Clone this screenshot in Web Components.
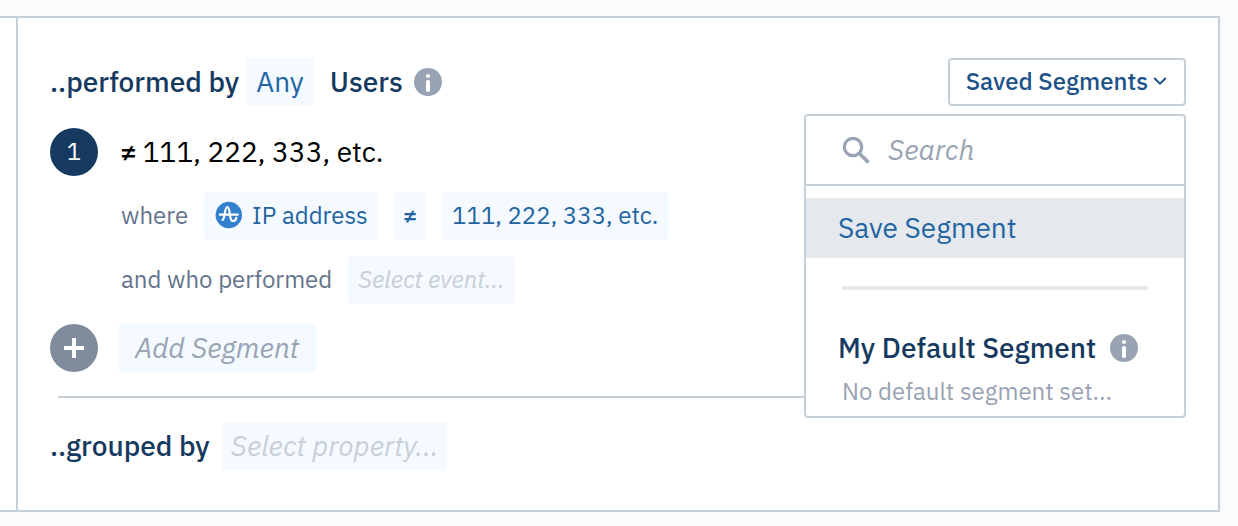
<!DOCTYPE html>
<html lang="en">
<head>
<meta charset="utf-8">
<title>Segmentation</title>
<style>
  body { margin: 0; background: #fbfbfb; font-family: "IBM Plex Sans", Roboto, sans-serif; }
</style>
</head>
<body>
<segment-builder></segment-builder>
<script>
const define = (name, html) => {
  const template = document.createElement('template');
  template.innerHTML = '<style>*{box-sizing:border-box}</style>' + html;
  customElements.define(name, class extends HTMLElement {
    constructor() {
      super();
      this.attachShadow({ mode: 'open' }).append(template.content.cloneNode(true));
    }
  });
};

define('info-icon', `
  <style>
    :host { display: block; flex: none; width: 28px; height: 28px; }
    svg { display: block; }
  </style>
  <svg width="28" height="28" viewBox="0 0 28 28" role="img" aria-label="Info">
    <circle cx="14" cy="14" r="14" fill="#98a3b3"/>
    <circle cx="14" cy="8" r="2.1" fill="#fff"/>
    <rect x="12" y="12" width="4" height="12" rx="1.8" fill="#fff"/>
  </svg>`);

define('query-chip', `
  <style>
    :host { display: block; flex: none; --pad: 10px; --size: 24px; --lift: 2px; }
    :host([size="large"]) { --size: 28px; --lift: 0px; }
    :host([pad="wide"]) { --pad: 17px; }
    :host([pad="narrow"]) { --pad: 9px; }
    :host([tone="muted"]) { --ink: #98a3b3; font-style: italic; }
    :host([tone="faint"]) { --ink: #c8cfd7; font-style: italic; }
    button { display: flex; align-items: center; gap: 10px; height: 48px; padding: 0 var(--pad) var(--lift);
      border: 0; border-radius: 4px; background: #f4faff; color: var(--ink, #2364a2);
      font-family: inherit; font-style: inherit; font-weight: inherit; font-size: var(--size); line-height: 36px; white-space: nowrap; }
  </style>
  <button type="button"><slot name="icon"></slot><slot></slot></button>`);

define('round-badge', `
  <style>
    :host { display: flex; flex: none; align-items: center; justify-content: center; width: 48px; height: 48px;
      border-radius: 50%; background: #163a5f; color: #fff; font-size: 24px; line-height: 32px; }
    :host([kind="step"]) { padding-bottom: 2px; }
    :host([kind="add"]) { background: #7e8c9d; }
  </style>
  <slot></slot>`);

define('saved-segments', `
  <style>
    :host { display: block; position: relative; flex: none; }
    .toggle { display: flex; align-items: center; justify-content: space-between; gap: 5px; height: 48px; padding: 0 17px 2px 16px;
      border: 2px solid #c6d0d9; border-radius: 4px; background: #fff; color: #1d5288;
      font-family: inherit; font-weight: 500; font-size: 24px; line-height: 32px; }
    .menu { position: absolute; z-index: 1; top: 56px; right: 0; width: 382px; background: #fff;
      border: 2px solid #c6d0d9; border-radius: 4px; }
    .search { display: flex; align-items: center; gap: 18px; height: 70px; padding: 0 36px; border-bottom: 2px solid #c6d0d9; }
    .search svg { flex: none; }
    input { flex: 1; min-width: 0; padding: 0; border: 0; outline: 0; background: none; color: #98a3b3;
      font-family: inherit; font-size: 28px; line-height: 36px; font-style: italic; }
    input::placeholder { color: #98a3b3; opacity: 1; }
    .item { display: block; width: 100%; height: 60px; margin: 12px 0 0; padding: 0 32px; border: 0; background: #e5e9ee;
      color: #2364a2; font-family: inherit; font-size: 28px; line-height: 36px; text-align: left; }
    hr { height: 4px; margin: 28px 36px 0; border: 0; background: #e5e9ee; }
    .title { display: flex; align-items: center; gap: 14px; margin: 40px 32px 0; }
    h3 { margin: 0; color: #163a5f; font-weight: 500; font-size: 28px; line-height: 36px; white-space: nowrap; }
    p { margin: 9px 36px; color: #98a3b3; font-size: 24px; line-height: 32px; white-space: nowrap; }
  </style>
  <button class="toggle" type="button" aria-expanded="true">Saved Segments
    <svg width="14" height="8" viewBox="0 0 14 8" fill="none" stroke="#1d5288" stroke-width="2" aria-hidden="true"><path d="M1.2 1 7 6.6 12.8 1"/></svg>
  </button>
  <div class="menu">
    <label class="search">
      <svg width="28" height="28" viewBox="0 0 28 28" fill="none" stroke="#98a3b3" aria-label="Search"><circle cx="11" cy="11" r="8.7" stroke-width="3.2"/><path d="M17 17 26.4 26.4" stroke-width="3.6"/></svg>
      <input type="text" placeholder="Search">
    </label>
    <button class="item" type="button">Save Segment</button>
    <hr>
    <div class="title"><h3>My Default Segment</h3><info-icon></info-icon></div>
    <p>No default segment set...</p>
  </div>`);

define('segment-builder', `
  <style>
    :host { display: flex; margin: 16px 18px 14px 0; border: 2px solid #c6d0d9; border-left: 0; background: #fff; }
    .previous { flex: none; width: 18px; border-right: 2px solid #c6d0d9; }
    main { flex: 1; min-width: 0; padding: 40px 32px; }
    .row, .lead { display: flex; align-items: center; }
    .top { justify-content: space-between; }
    h2 { margin: 0; color: #163a5f; font-weight: 500; font-size: 28px; line-height: 36px; white-space: nowrap; }
    .lead h2 + query-chip { margin: 0 16px 0 7px; }
    .lead info-icon { margin-left: 11px; }
    .name { gap: 22px; margin-top: 22px; color: #000; font-size: 28px; line-height: 36px; }
    .name p { display: flex; gap: 6px; margin: 0; white-space: nowrap; }
    .operator { font-weight: 500; }
    .clause { gap: 16px; margin-top: 16px; padding-left: 71px; color: #64748b; font-size: 24px; line-height: 32px; white-space: nowrap; }
    .clause > span { padding-bottom: 2px; }
    .add { gap: 20px; margin-top: 20px; }
    .rule { height: 2px; margin: 24px 0 24px 8px; border: 0; background: #c6d0d9; }
    .group { gap: 12px; }
    svg { display: block; }
  </style>
  <div class="previous"></div>
  <main>
    <div class="row top">
      <div class="lead">
        <h2>..performed by</h2>
        <query-chip size="large">Any</query-chip>
        <h2>Users</h2>
        <info-icon></info-icon>
      </div>
      <saved-segments></saved-segments>
    </div>
    <div class="row name"><round-badge kind="step">1</round-badge><p><span class="operator">≠</span><span>111, 222, 333, etc.</span></p></div>
    <div class="row clause">
      <span>where</span>
      <query-chip>
        <svg slot="icon" width="28" height="28" viewBox="0 0 28 28" fill="none" stroke="#fff" stroke-linecap="round" stroke-linejoin="round" aria-hidden="true">
          <circle cx="14.8" cy="14" r="13.2" fill="#3380cf" stroke="none"/>
          <path stroke-width="2.2" d="M5.8 13.6H23.8M8.6 18.9C11 18.4 10.2 6.2 13.4 6.2 16.6 6.2 15 20 18.6 20 20.8 20 22 18.8 22.2 16.8"/>
        </svg>IP address</query-chip>
      <query-chip class="operator" pad="narrow">≠</query-chip>
      <query-chip>111, 222, 333, etc.</query-chip>
    </div>
    <div class="row clause"><span>and who performed</span><query-chip tone="faint">Select event...</query-chip></div>
    <div class="row add">
      <round-badge kind="add"><svg width="20" height="20" viewBox="0 0 20 20" role="img" aria-label="Add"><path fill="#fff" d="M8 0h4v8h8v4h-8v8H8v-8H0V8h8z"/></svg></round-badge>
      <query-chip size="large" pad="wide" tone="muted">Add Segment</query-chip>
    </div>
    <hr class="rule">
    <div class="row group"><h2>..grouped by</h2><query-chip size="large" pad="narrow" tone="faint">Select property...</query-chip></div>
  </main>`);
</script>
</body>
</html>
